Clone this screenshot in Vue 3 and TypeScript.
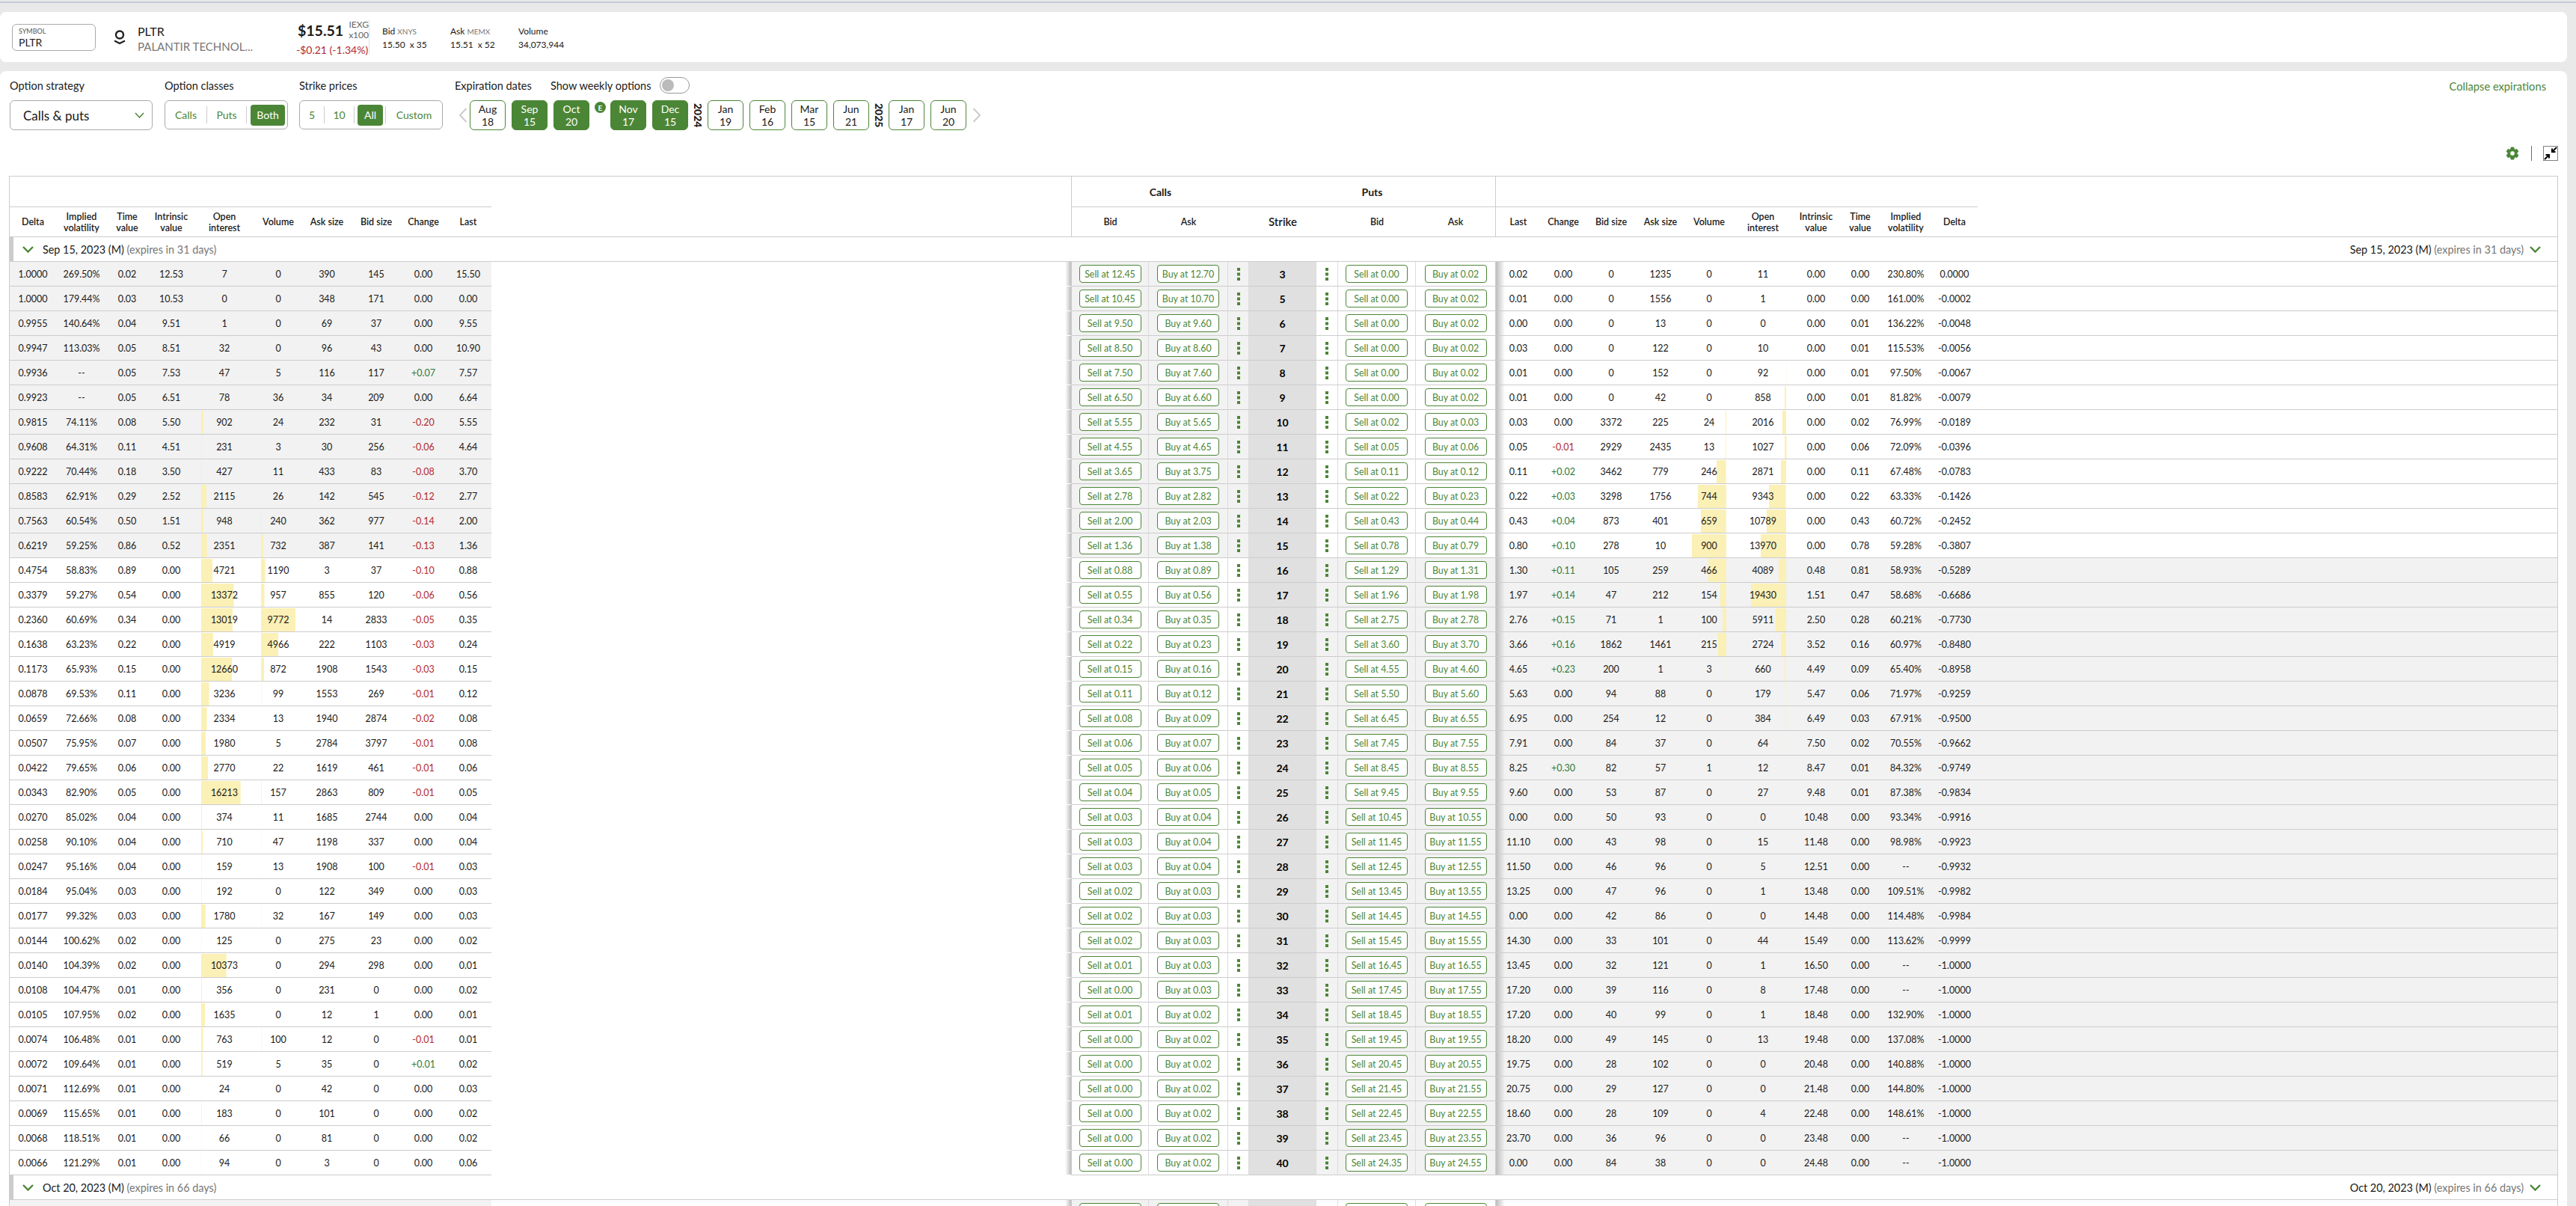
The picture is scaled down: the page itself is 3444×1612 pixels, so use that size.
<script setup lang="ts">
interface Row {
  strike: string;
  calls: string[];
  callBid: string;
  callAsk: string;
  putBid: string;
  putAsk: string;
  puts: string[];
  callItm: boolean;
}

// strike | call bid, call ask, put bid, put ask | call columns | put columns
const raw = `
3|12.45 12.70 0.00 0.02|1.0000 269.50% 0.02 12.53 7 0 390 145 0.00 15.50|0.02 0.00 0 1235 0 11 0.00 0.00 230.80% 0.0000
5|10.45 10.70 0.00 0.02|1.0000 179.44% 0.03 10.53 0 0 348 171 0.00 0.00|0.01 0.00 0 1556 0 1 0.00 0.00 161.00% -0.0002
6|9.50 9.60 0.00 0.02|0.9955 140.64% 0.04 9.51 1 0 69 37 0.00 9.55|0.00 0.00 0 13 0 0 0.00 0.01 136.22% -0.0048
7|8.50 8.60 0.00 0.02|0.9947 113.03% 0.05 8.51 32 0 96 43 0.00 10.90|0.03 0.00 0 122 0 10 0.00 0.01 115.53% -0.0056
8|7.50 7.60 0.00 0.02|0.9936 -- 0.05 7.53 47 5 116 117 +0.07 7.57|0.01 0.00 0 152 0 92 0.00 0.01 97.50% -0.0067
9|6.50 6.60 0.00 0.02|0.9923 -- 0.05 6.51 78 36 34 209 0.00 6.64|0.01 0.00 0 42 0 858 0.00 0.01 81.82% -0.0079
10|5.55 5.65 0.02 0.03|0.9815 74.11% 0.08 5.50 902 24 232 31 -0.20 5.55|0.03 0.00 3372 225 24 2016 0.00 0.02 76.99% -0.0189
11|4.55 4.65 0.05 0.06|0.9608 64.31% 0.11 4.51 231 3 30 256 -0.06 4.64|0.05 -0.01 2929 2435 13 1027 0.00 0.06 72.09% -0.0396
12|3.65 3.75 0.11 0.12|0.9222 70.44% 0.18 3.50 427 11 433 83 -0.08 3.70|0.11 +0.02 3462 779 246 2871 0.00 0.11 67.48% -0.0783
13|2.78 2.82 0.22 0.23|0.8583 62.91% 0.29 2.52 2115 26 142 545 -0.12 2.77|0.22 +0.03 3298 1756 744 9343 0.00 0.22 63.33% -0.1426
14|2.00 2.03 0.43 0.44|0.7563 60.54% 0.50 1.51 948 240 362 977 -0.14 2.00|0.43 +0.04 873 401 659 10789 0.00 0.43 60.72% -0.2452
15|1.36 1.38 0.78 0.79|0.6219 59.25% 0.86 0.52 2351 732 387 141 -0.13 1.36|0.80 +0.10 278 10 900 13970 0.00 0.78 59.28% -0.3807
16|0.88 0.89 1.29 1.31|0.4754 58.83% 0.89 0.00 4721 1190 3 37 -0.10 0.88|1.30 +0.11 105 259 466 4089 0.48 0.81 58.93% -0.5289
17|0.55 0.56 1.96 1.98|0.3379 59.27% 0.54 0.00 13372 957 855 120 -0.06 0.56|1.97 +0.14 47 212 154 19430 1.51 0.47 58.68% -0.6686
18|0.34 0.35 2.75 2.78|0.2360 60.69% 0.34 0.00 13019 9772 14 2833 -0.05 0.35|2.76 +0.15 71 1 100 5911 2.50 0.28 60.21% -0.7730
19|0.22 0.23 3.60 3.70|0.1638 63.23% 0.22 0.00 4919 4966 222 1103 -0.03 0.24|3.66 +0.16 1862 1461 215 2724 3.52 0.16 60.97% -0.8480
20|0.15 0.16 4.55 4.60|0.1173 65.93% 0.15 0.00 12660 872 1908 1543 -0.03 0.15|4.65 +0.23 200 1 3 660 4.49 0.09 65.40% -0.8958
21|0.11 0.12 5.50 5.60|0.0878 69.53% 0.11 0.00 3236 99 1553 269 -0.01 0.12|5.63 0.00 94 88 0 179 5.47 0.06 71.97% -0.9259
22|0.08 0.09 6.45 6.55|0.0659 72.66% 0.08 0.00 2334 13 1940 2874 -0.02 0.08|6.95 0.00 254 12 0 384 6.49 0.03 67.91% -0.9500
23|0.06 0.07 7.45 7.55|0.0507 75.95% 0.07 0.00 1980 5 2784 3797 -0.01 0.08|7.91 0.00 84 37 0 64 7.50 0.02 70.55% -0.9662
24|0.05 0.06 8.45 8.55|0.0422 79.65% 0.06 0.00 2770 22 1619 461 -0.01 0.06|8.25 +0.30 82 57 1 12 8.47 0.01 84.32% -0.9749
25|0.04 0.05 9.45 9.55|0.0343 82.90% 0.05 0.00 16213 157 2863 809 -0.01 0.05|9.60 0.00 53 87 0 27 9.48 0.01 87.38% -0.9834
26|0.03 0.04 10.45 10.55|0.0270 85.02% 0.04 0.00 374 11 1685 2744 0.00 0.04|0.00 0.00 50 93 0 0 10.48 0.00 93.34% -0.9916
27|0.03 0.04 11.45 11.55|0.0258 90.10% 0.04 0.00 710 47 1198 337 0.00 0.04|11.10 0.00 43 98 0 15 11.48 0.00 98.98% -0.9923
28|0.03 0.04 12.45 12.55|0.0247 95.16% 0.04 0.00 159 13 1908 100 -0.01 0.03|11.50 0.00 46 96 0 5 12.51 0.00 -- -0.9932
29|0.02 0.03 13.45 13.55|0.0184 95.04% 0.03 0.00 192 0 122 349 0.00 0.03|13.25 0.00 47 96 0 1 13.48 0.00 109.51% -0.9982
30|0.02 0.03 14.45 14.55|0.0177 99.32% 0.03 0.00 1780 32 167 149 0.00 0.03|0.00 0.00 42 86 0 0 14.48 0.00 114.48% -0.9984
31|0.02 0.03 15.45 15.55|0.0144 100.62% 0.02 0.00 125 0 275 23 0.00 0.02|14.30 0.00 33 101 0 44 15.49 0.00 113.62% -0.9999
32|0.01 0.03 16.45 16.55|0.0140 104.39% 0.02 0.00 10373 0 294 298 0.00 0.01|13.45 0.00 32 121 0 1 16.50 0.00 -- -1.0000
33|0.00 0.03 17.45 17.55|0.0108 104.47% 0.01 0.00 356 0 231 0 0.00 0.02|17.20 0.00 39 116 0 8 17.48 0.00 -- -1.0000
34|0.01 0.02 18.45 18.55|0.0105 107.95% 0.02 0.00 1635 0 12 1 0.00 0.01|17.20 0.00 40 99 0 1 18.48 0.00 132.90% -1.0000
35|0.00 0.02 19.45 19.55|0.0074 106.48% 0.01 0.00 763 100 12 0 -0.01 0.01|18.20 0.00 49 145 0 13 19.48 0.00 137.08% -1.0000
36|0.00 0.02 20.45 20.55|0.0072 109.64% 0.01 0.00 519 5 35 0 +0.01 0.02|19.75 0.00 28 102 0 0 20.48 0.00 140.88% -1.0000
37|0.00 0.02 21.45 21.55|0.0071 112.69% 0.01 0.00 24 0 42 0 0.00 0.03|20.75 0.00 29 127 0 0 21.48 0.00 144.80% -1.0000
38|0.00 0.02 22.45 22.55|0.0069 115.65% 0.01 0.00 183 0 101 0 0.00 0.02|18.60 0.00 28 109 0 4 22.48 0.00 148.61% -1.0000
39|0.00 0.02 23.45 23.55|0.0068 118.51% 0.01 0.00 66 0 81 0 0.00 0.02|23.70 0.00 36 96 0 0 23.48 0.00 -- -1.0000
40|0.00 0.02 24.35 24.55|0.0066 121.29% 0.01 0.00 94 0 3 0 0.00 0.06|0.00 0.00 84 38 0 0 24.48 0.00 -- -1.0000
`;

const sepRows: Row[] = raw
  .trim()
  .split('\n')
  .map((line, i) => {
    const [strike, quotes, calls, puts] = line.split('|');
    const [callBid, callAsk, putBid, putAsk] = quotes.split(' ');
    return { strike, callBid, callAsk, putBid, putAsk, calls: calls.split(' '), puts: puts.split(' '), callItm: i < 12 };
  });

// the Oct group is cut off by the bottom of the window, its row shows no text
const octRow: Row = {
  strike: '',
  callBid: '',
  callAsk: '',
  putBid: '',
  putAsk: '',
  calls: Array(10).fill(''),
  puts: Array(10).fill(''),
  callItm: true,
};

const groups = [
  { title: 'Sep 15, 2023 (M)', note: '(expires in 31 days)', rows: sepRows },
  { title: 'Oct 20, 2023 (M)', note: '(expires in 66 days)', rows: [octRow] },
];

const callHead = ['Delta', 'Implied\nvolatility', 'Time\nvalue', 'Intrinsic\nvalue', 'Open\ninterest', 'Volume', 'Ask size', 'Bid size', 'Change', 'Last'];
const putHead = ['Last', 'Change', 'Bid size', 'Ask size', 'Volume', 'Open\ninterest', 'Intrinsic\nvalue', 'Time\nvalue', 'Implied\nvolatility', 'Delta'];

const expirations = [
  { kind: 'date', m: 'Aug', d: '18', on: false },
  { kind: 'date', m: 'Sep', d: '15', on: true },
  { kind: 'date', m: 'Oct', d: '20', on: true },
  { kind: 'earn' },
  { kind: 'date', m: 'Nov', d: '17', on: true },
  { kind: 'date', m: 'Dec', d: '15', on: true },
  { kind: 'year', y: '2024' },
  { kind: 'date', m: 'Jan', d: '19', on: false },
  { kind: 'date', m: 'Feb', d: '16', on: false },
  { kind: 'date', m: 'Mar', d: '15', on: false },
  { kind: 'date', m: 'Jun', d: '21', on: false },
  { kind: 'year', y: '2025' },
  { kind: 'date', m: 'Jan', d: '17', on: false },
  { kind: 'date', m: 'Jun', d: '20', on: false },
];

// width of the yellow bars: px per contract, one scale per column
const callScale: Record<number, number> = { 4: 52.7 / 16213, 5: 46 / 9772 };
const putScale: Record<number, number> = { 4: 46 / 900, 5: 47.3 / 19430 };

const barStyle = (value: string, scale?: number) =>
  scale ? { backgroundSize: `${Math.round(Number(value) * scale * 10) / 10}px calc(100% - 1px)` } : undefined;

const changeClass = (value: string) => (value.startsWith('+') ? 'up' : value.startsWith('-') ? 'down' : '');
</script>

<template>
  <div class="page">
    <div class="topline"></div>

    <div class="quote-card">
      <div class="symbol-box">
        <span class="symbol-label">SYMBOL</span>
        <span class="symbol-value">PLTR</span>
      </div>
      <svg class="logo" width="16" height="20" viewBox="0 0 16 20">
        <circle cx="8" cy="6.5" r="5" fill="none" stroke="#222" stroke-width="2.4" />
        <path d="M1 14.5 L8 18 L15 14.5" fill="none" stroke="#222" stroke-width="2.2" />
      </svg>
      <div class="company">
        <div class="ticker">PLTR</div>
        <div class="company-name">PALANTIR TECHNOL...</div>
      </div>
      <div class="price-block">
        <div class="price-top">
          <span class="price">$15.51</span>
          <span class="exchange">IEXG<br />x100</span>
        </div>
        <div class="price-change">-$0.21 (-1.34%)</div>
      </div>
      <div class="stat first-stat">
        <div>Bid <small>XNYS</small></div>
        <div>15.50 &nbsp;x 35</div>
      </div>
      <div class="stat">
        <div>Ask <small>MEMX</small></div>
        <div>15.51 &nbsp;x 52</div>
      </div>
      <div class="stat">
        <div>Volume</div>
        <div>34,073,944</div>
      </div>
    </div>

    <div class="chain-card">
      <div class="controls">
        <div class="control strategy">
          <div class="control-label">Option strategy</div>
          <div class="select">
            <span>Calls &amp; puts</span>
            <svg width="13" height="8" viewBox="0 0 13 8"><path d="M1 1 L6.5 7 L12 1" fill="none" stroke="#4b8636" stroke-width="1.5" /></svg>
          </div>
        </div>
        <div class="control classes">
          <div class="control-label">Option classes</div>
          <div class="segments">
            <span class="seg seg-calls">Calls</span>
            <span class="seg seg-puts">Puts</span>
            <span class="seg-on seg-both">Both</span>
          </div>
        </div>
        <div class="control strikes">
          <div class="control-label">Strike prices</div>
          <div class="segments">
            <span class="seg seg-5">5</span>
            <span class="seg seg-10">10</span>
            <span class="seg-on seg-all">All</span>
            <span class="seg seg-custom">Custom</span>
          </div>
        </div>
        <div class="control expirations">
          <div class="control-label exp-label">
            <span class="exp-title">Expiration dates</span>
            <span>Show weekly options</span>
            <span class="toggle"><span class="knob"></span></span>
          </div>
          <div class="tiles">
            <svg class="pager" width="12" height="20" viewBox="0 0 12 20"><path d="M10.5 1 L2 10 L10.5 19" fill="none" stroke="#ccc" stroke-width="2" /></svg>
            <template v-for="(e, i) in expirations" :key="i">
              <div v-if="e.kind === 'date'" class="tile" :class="{ on: e.on }">
                <span>{{ e.m }}</span>
                <span>{{ e.d }}</span>
              </div>
              <span v-else-if="e.kind === 'earn'" class="earnings">E</span>
              <span v-else class="year">{{ e.y }}</span>
            </template>
            <svg class="pager pager-next" width="12" height="20" viewBox="0 0 12 20"><path d="M1.5 1 L10 10 L1.5 19" fill="none" stroke="#ccc" stroke-width="2" /></svg>
          </div>
        </div>
        <div class="collapse">Collapse expirations</div>
      </div>

      <div class="tools">
        <svg width="20" height="20" viewBox="0 0 24 24" fill="#4b8636">
          <path d="M19.14 12.94c.04-.3.06-.61.06-.94 0-.32-.02-.64-.07-.94l2.03-1.58a.49.49 0 0 0 .12-.61l-1.92-3.32a.488.488 0 0 0-.59-.22l-2.39.96c-.5-.38-1.03-.7-1.62-.94l-.36-2.54a.484.484 0 0 0-.48-.41h-3.84c-.24 0-.43.17-.47.41l-.36 2.54c-.59.24-1.13.57-1.62.94l-2.39-.96c-.22-.08-.47 0-.59.22L2.74 8.87c-.12.21-.08.47.12.61l2.03 1.58c-.05.3-.09.63-.09.94s.02.64.07.94l-2.03 1.58a.49.49 0 0 0-.12.61l1.92 3.32c.12.22.37.29.59.22l2.39-.96c.5.38 1.03.7 1.62.94l.36 2.54c.05.24.24.41.48.41h3.84c.24 0 .44-.17.47-.41l.36-2.54c.59-.24 1.13-.56 1.62-.94l2.39.96c.22.08.47 0 .59-.22l1.92-3.32c.12-.22.07-.47-.12-.61l-2.01-1.58zM12 16c-2.2 0-4-1.8-4-4s1.8-4 4-4 4 1.8 4 4-1.8 4-4 4z" stroke="#4b8636" stroke-width="1.2" />
        </svg>
        <span class="tools-divider"></span>
        <svg width="20" height="20" viewBox="0 0 20 20">
          <rect x="0.5" y="0.5" width="19" height="19" fill="none" stroke="#000" stroke-dasharray="1 1" />
          <path d="M18 2 L12 8 M12 3.5 V8 H16.5" fill="none" stroke="#000" stroke-width="2" />
          <path d="M2 18 L8 12 M3.5 12 H8 V16.5" fill="none" stroke="#000" stroke-width="2" />
        </svg>
      </div>

      <div class="chain">
        <div class="grid head-top">
          <div class="head-blank side"></div>
          <div class="gap"></div>
          <div class="head-group calls-group">Calls</div>
          <div class="head-group puts-group">Puts</div>
          <div class="head-blank side"></div>
        </div>
        <div class="grid head-bottom">
          <div v-for="h in callHead" :key="'c' + h" class="head-cell">{{ h }}</div>
          <div class="gap"></div>
          <div class="head-cell edge-left">Bid</div>
          <div class="head-cell">Ask</div>
          <div class="head-cell"></div>
          <div class="head-cell strike-head">Strike</div>
          <div class="head-cell"></div>
          <div class="head-cell">Bid</div>
          <div class="head-cell edge-right">Ask</div>
          <div v-for="h in putHead" :key="'p' + h" class="head-cell">{{ h }}</div>
        </div>

        <template v-for="g in groups" :key="g.title">
          <div class="group-head">
            <div class="group-title">
              <svg width="15" height="9" viewBox="0 0 15 9"><path d="M1 1 L7.5 7.5 L14 1" fill="none" stroke="#4b8636" stroke-width="2.4" /></svg>
              <span>{{ g.title }} <em>{{ g.note }}</em></span>
            </div>
            <div class="group-title group-title-right">
              <span>{{ g.title }} <em>{{ g.note }}</em></span>
              <svg width="15" height="9" viewBox="0 0 15 9"><path d="M1 1 L7.5 7.5 L14 1" fill="none" stroke="#4b8636" stroke-width="2.4" /></svg>
            </div>
          </div>

          <div v-for="r in g.rows" :key="g.title + r.strike" class="grid row" :class="r.callItm ? 'call-itm' : 'put-itm'">
            <div
              v-for="(v, c) in r.calls"
              :key="'c' + c"
              class="cell call-side"
              :class="[c === 8 ? changeClass(v) : '', c === 4 ? 'bar-oi-left' : '', c === 5 ? 'bar-vol-left' : '']"
              :style="barStyle(v, callScale[c])"
            >{{ v }}</div>
            <div class="gap gap-shadow"></div>
            <div class="cell call-side action edge-left"><button class="trade">Sell at {{ r.callBid }}</button></div>
            <div class="cell call-side action"><button class="trade">Buy at {{ r.callAsk }}</button></div>
            <div class="cell call-side action">
              <svg width="4" height="17" viewBox="0 0 4 17" fill="#4b8636"><rect width="4" height="4" /><rect y="6.5" width="4" height="4" /><rect y="13" width="4" height="4" /></svg>
            </div>
            <div class="cell strike">{{ r.strike }}</div>
            <div class="cell put-side action">
              <svg width="4" height="17" viewBox="0 0 4 17" fill="#4b8636"><rect width="4" height="4" /><rect y="6.5" width="4" height="4" /><rect y="13" width="4" height="4" /></svg>
            </div>
            <div class="cell put-side action"><button class="trade">Sell at {{ r.putBid }}</button></div>
            <div class="cell put-side action edge-right"><button class="trade">Buy at {{ r.putAsk }}</button></div>
            <div
              v-for="(v, c) in r.puts"
              :key="'p' + c"
              class="cell put-side"
              :class="[c === 0 ? 'shadow-right' : '', c === 1 ? changeClass(v) : '', c === 4 ? 'bar-vol-right' : '', c === 5 ? 'bar-oi-right' : '']"
              :style="barStyle(v, putScale[c])"
            >{{ v }}</div>
            <div class="cell put-side"></div>
          </div>
        </template>
      </div>
    </div>
  </div>
</template>

<style scoped>
.page {
  height: 1612px;
  overflow: hidden;
  background: #e9e9e9;
  color: #1a1a1a;
  font-family: Lato, "Liberation Sans", sans-serif;
  font-size: 12px;
  box-sizing: border-box;
  padding-top: 2px;
}

.topline {
  height: 2px;
  background: #c6c9d8;
}

/* quote bar */
.quote-card {
  display: flex;
  align-items: center;
  height: 67px;
  margin: 12px 12px 0 0;
  padding-left: 16px;
  background: #fff;
  border-radius: 8px;
}

.symbol-box {
  display: flex;
  flex-direction: column;
  justify-content: center;
  width: 112px;
  height: 36px;
  box-sizing: border-box;
  padding-left: 8px;
  border: 1px solid #aaa;
  border-radius: 6px;
}

.symbol-label {
  font-size: 9px;
  line-height: 13px;
  color: #555;
}

.symbol-value {
  font-size: 14px;
  line-height: 17px;
}

.logo {
  margin-left: 24px;
}

.company {
  width: 212px;
  margin-left: 16px;
  padding-top: 4px;
}

.ticker {
  font-size: 16px;
  line-height: 20px;
}

.company-name {
  font-size: 15px;
  line-height: 20px;
  color: #777;
}

.price-block {
  width: 97px;
  height: 47px;
  border-right: 1px solid #e2e2e2;
}

.price-top {
  display: flex;
  justify-content: space-between;
  height: 28px;
}

.price {
  padding: 1px 0 0 2px;
  font-size: 19.5px;
  font-weight: 700;
  line-height: 28px;
}

.exchange {
  font-size: 12px;
  line-height: 14px;
  color: #666;
  text-align: right;
}

.price-change {
  margin-top: 4px;
  font-size: 14px;
  line-height: 18px;
  color: #b3282d;
  white-space: nowrap;
}

.stat {
  width: 91px;
  font-size: 12px;
  line-height: 18px;
  padding-top: 2px;
}

.first-stat {
  margin-left: 17px;
}

.stat small {
  font-size: 10px;
  color: #777;
}

/* controls */
.chain-card {
  margin: 12px 12px 0 0;
  padding: 10px 12px 0;
  height: 1600px;
  box-sizing: border-box;
  background: #fff;
  border-radius: 8px 8px 0 0;
}

.controls {
  display: flex;
  height: 71px;
}

.control-label {
  height: 20px;
  margin-bottom: 9px;
  font-size: 14.5px;
  line-height: 20px;
  white-space: nowrap;
}

.strategy {
  width: 191px;
  margin-left: 1px;
}

.classes {
  width: 165px;
  margin-left: 16px;
}

.strikes {
  width: 192px;
  margin-left: 15px;
}

.expirations {
  margin-left: 16px;
}

.select {
  display: flex;
  align-items: center;
  justify-content: space-between;
  height: 40px;
  box-sizing: border-box;
  padding: 0 10px 0 17px;
  border: 1px solid #aaa;
  border-radius: 6px;
  font-size: 17px;
}

.segments {
  display: flex;
  align-items: center;
  height: 39px;
  margin-top: 1px;
  box-sizing: border-box;
  border: 1px solid #aaa;
  border-radius: 6px;
  font-size: 14px;
  color: #4b8636;
}

.seg {
  display: flex;
  align-items: center;
  justify-content: center;
  height: 23px;
  border-right: 1px solid #ccc;
}

.seg-on {
  display: flex;
  align-items: center;
  justify-content: center;
  height: 28px;
  background: #4b8636;
  border-radius: 4px;
  color: #fff;
}

.seg-calls { width: 55px; }
.seg-puts { width: 52px; }
.seg-both { width: 46px; margin-left: 5px; }
.seg-5 { width: 32px; }
.seg-10 { width: 39px; }
.seg-all { width: 34px; margin: 0 3px 0 4px; border-right: 0; }
.seg-custom { flex: 1; border-right: 0; border-left: 1px solid #ccc; }

.exp-label {
  display: flex;
  align-items: flex-start;
}

.exp-title {
  width: 128px;
}

.toggle {
  display: flex;
  align-items: center;
  width: 40px;
  height: 22px;
  margin: -2px 0 0 12px;
  box-sizing: border-box;
  padding-left: 2px;
  border: 1px solid #999;
  border-radius: 11px;
}

.knob {
  width: 16px;
  height: 16px;
  background: #bbb;
  border-radius: 50%;
}

.tiles {
  display: flex;
  align-items: center;
  height: 40px;
  margin-top: 2px;
}

.pager {
  margin: 0 3px 0 5px;
}

.pager-next {
  margin: 0;
}

.tile {
  display: flex;
  flex-direction: column;
  align-items: center;
  justify-content: center;
  width: 48px;
  height: 40px;
  margin-right: 8px;
  box-sizing: border-box;
  border: 1px solid #4b8636;
  border-radius: 6px;
  font-size: 14px;
  line-height: 17px;
}

.tile.on {
  background: #4b8636;
  color: #fff;
}

.earnings {
  align-self: flex-start;
  display: flex;
  align-items: center;
  justify-content: center;
  width: 15px;
  height: 15px;
  margin: 2px 6px 0 -1px;
  background: #4b8636;
  border-radius: 50%;
  color: #fff;
  font-size: 10px;
  font-weight: 700;
}

.year {
  writing-mode: vertical-rl;
  width: 13px;
  margin: 0 6px 0 -1px;
  font-size: 14px;
  font-weight: 900;
  line-height: 13px;
  text-align: center;
}

.collapse {
  margin-left: auto;
  margin-right: 16px;
  font-size: 14.7px;
  line-height: 20px;
  color: #4b8636;
}

.tools {
  display: flex;
  align-items: center;
  justify-content: flex-end;
  height: 20px;
  margin-top: 19px;
}

.tools-divider {
  width: 1px;
  height: 20px;
  margin: 0 15px;
  background: #4b8636;
}

/* chain table */
.chain {
  margin-top: 20px;
  border: 1px solid #ccc;
  border-bottom: 0;
  font-size: 12.5px;
}

.grid {
  display: grid;
  grid-template-columns:
    62px 68px 54px 64px 78px 66px 64px 68px 58px 62px
    775px
    104px 106px 28px 90px 29px 104px 107px
    60px 60px 68px 64px 66px 78px 64px 54px 68px 62px
    1fr;
}

.head-top {
  grid-template-columns: 644px 775px 238px 330px 644px;
  height: 41px;
}

.head-blank {
  border-bottom: 1px solid #ccc;
}

.head-group {
  display: flex;
  align-items: center;
  justify-content: center;
  border-bottom: 1px solid #ccc;
  font-size: 14px;
  font-weight: 700;
}

.calls-group {
  border-left: 1px solid #ccc;
}

.puts-group {
  border-right: 1px solid #ccc;
}

.head-bottom {
  height: 40px;
  box-sizing: border-box;
  border-bottom: 1px solid #ccc;
}

.head-cell {
  display: flex;
  align-items: center;
  justify-content: center;
  box-sizing: border-box;
  font-weight: 600;
  line-height: 15px;
  text-align: center;
  white-space: pre-line;
}

.strike-head {
  font-size: 15px;
}

.edge-left {
  border-left: 1px solid #ccc;
}

.edge-right {
  border-right: 1px solid #ccc;
}

.group-head {
  display: flex;
  align-items: center;
  justify-content: space-between;
  height: 33px;
  box-sizing: border-box;
  border-left: 5px solid #ccc;
  border-bottom: 1px solid #ccc;
  padding: 0 22px 0 12px;
  font-size: 14.4px;
}

.group-title {
  display: flex;
  align-items: center;
  gap: 12px;
}

.group-title-right {
  gap: 8px;
}

.group-title em {
  font-style: normal;
  color: #777;
}

.row {
  height: 33px;
}

.cell {
  display: flex;
  align-items: center;
  justify-content: center;
  box-sizing: border-box;
  border-bottom: 1px solid #ccc;
  background-repeat: no-repeat;
}

.call-itm .call-side,
.put-itm .put-side {
  background-color: #f2f2f2;
}

.up {
  color: #2f7a3a;
}

.down {
  color: #b3282d;
}

.bar-oi-left,
.bar-vol-left,
.bar-oi-right,
.bar-vol-right {
  background-image: linear-gradient(#fbf0b5, #fbf0b5);
}

.bar-oi-left { background-position: 8px 1px; }
.bar-vol-left { background-position: 10px 1px; }
.bar-vol-right { background-position: right 10px top 1px; }
.bar-oi-right { background-position: right 8px top 1px; }

.gap {
  box-sizing: border-box;
}

.gap-shadow {
  border-bottom: 1px solid #fff;
  background: linear-gradient(to right, rgba(170, 170, 170, 0), #bdbdbd) right top / 8px 100% no-repeat;
  background-clip: padding-box;
}

.shadow-right {
  background-image: linear-gradient(to right, #bdbdbd, rgba(170, 170, 170, 0));
  background-size: 12px 100%;
}

.action {
  border-right: 1px solid #dcdcdc;
}

.edge-left.action {
  border-left: 1px solid #ccc;
}

.edge-right.action {
  border-right: 1px solid #ccc;
}

.trade {
  width: 83px;
  height: 24px;
  padding: 0;
  background: #fff;
  border: 1px solid #4b8636;
  border-radius: 4px;
  color: #4b8636;
  font-family: inherit;
  font-size: 12.4px;
  white-space: nowrap;
}

.strike {
  background: #e0e0e0;
  border-right: 1px solid #dcdcdc;
  font-size: 14px;
  font-weight: 700;
  color: #000;
}
</style>

<style>
html,
body {
  margin: 0;
  background: #e9e9e9;
  overflow: hidden;
}
</style>
